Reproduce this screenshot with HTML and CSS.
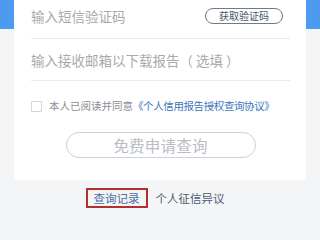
FILE: index.html
```html
<!DOCTYPE html>
<html lang="zh-CN">
<head>
  <meta charset="UTF-8">
  <title>个人信用报告查询</title>
  <link rel="stylesheet" href="styles.css">
</head>
<body>

<div class="page">
  <div class="card">
    <div class="row row-first">
      <span class="placeholder">输入短信验证码</span>
      <button class="code-btn">获取验证码</button>
    </div>
    <div class="row">
      <span class="placeholder">输入接收邮箱以下载报告（ 选填 ）</span>
    </div>
    <div class="agree">
      <span class="check"></span>
      <span class="agree-text">本人已阅读并同意<a class="agree-link">《个人信用报告授权查询协议》</a></span>
    </div>
    <div class="submit-wrap">
      <button class="submit">免费申请查询</button>
    </div>
  </div>

  <div class="links">
    <a class="link link-active">查询记录</a>
    <a class="link">个人征信异议</a>
  </div>
</div>

</body>
</html>
```

FILE: styles.css
```css
* { box-sizing: border-box; margin: 0; padding: 0; }
body {
  background: #f4f5f7;
  font-family: "Noto Sans CJK SC", "Noto Sans", sans-serif;
}

.page {
  height: 240px;
  padding: 0 14px;
  background: linear-gradient(#4d9bf0 29px, #f4f5f7 29px);
}

.card {
  background: #fff;
  padding: 0 16px 22px 17px;
  border-radius: 0 0 4px 4px;
}

.row {
  display: flex;
  align-items: center;
  justify-content: space-between;
  height: 42px;
  border-bottom: 1px solid #e9e9eb;
}
.row-first {
  height: 39px;
  padding-bottom: 6px;
}
.placeholder {
  font-size: 13.5px;
  color: #a9a9ab;
  white-space: pre;
}
.code-btn {
  height: 16px;
  width: 78px;
  margin-right: 7px;
  border: 1px solid #6d7a8e;
  border-radius: 8px;
  background: #fff;
  color: #4a5568;
  font-family: inherit;
  font-size: 10px;
  line-height: 14px;
}

.agree {
  display: flex;
  align-items: center;
  margin-top: 19px;
}
.check {
  width: 11px;
  height: 11px;
  border: 1px solid #d3d5d9;
  border-radius: 1px;
  margin-right: 7px;
}
.agree-text {
  font-size: 10.5px;
  color: #8a8d93;
  line-height: 12px;
}
.agree-link {
  color: #3d74ba;
  letter-spacing: -0.4px;
}

.submit-wrap {
  display: flex;
  justify-content: center;
  margin-top: 20px;
}
.submit {
  width: 190px;
  height: 26px;
  border: 1px solid #cdd1d8;
  border-radius: 13px;
  background: #fff;
  color: #b9bdc6;
  font-family: inherit;
  font-size: 15.5px;
  letter-spacing: 0.2px;
}

.links {
  display: flex;
  justify-content: center;
  align-items: center;
  gap: 8px;
  margin-top: 8px;
  padding-right: 10px;
}
.link {
  font-size: 11.5px;
  color: #4d5a72;
  line-height: 16px;
  white-space: nowrap;
}
.link-active {
  display: inline-flex;
  align-items: center;
  height: 20px;
  padding: 0 6px;
  color: #4d6fa3;
  border: 2px solid #b3302f;
}
```
